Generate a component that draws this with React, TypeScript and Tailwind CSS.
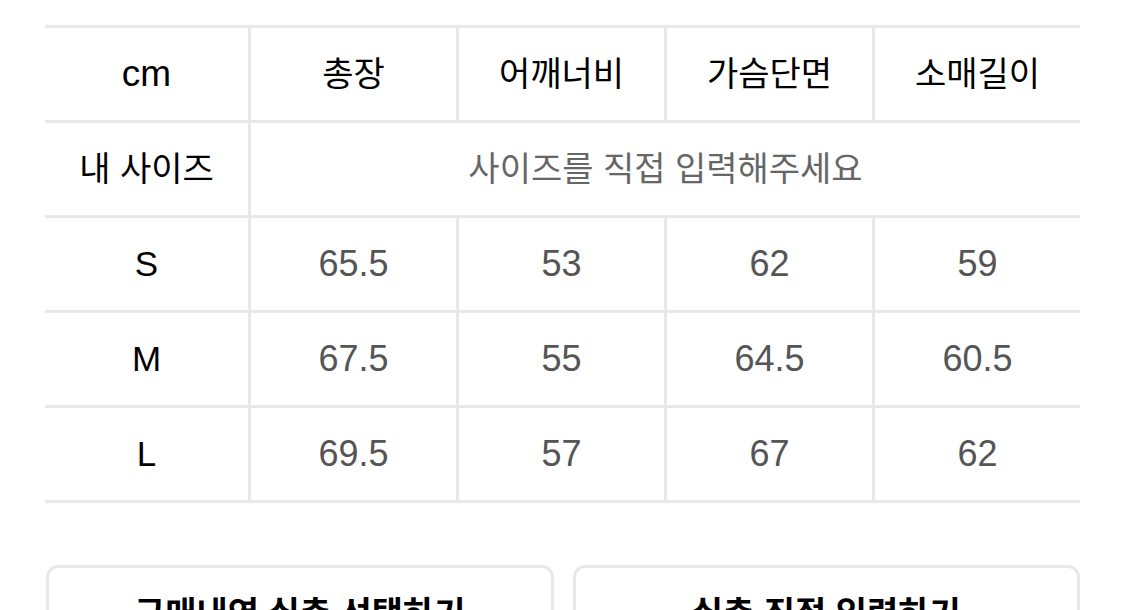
import React from "react";

const font = { fontFamily: '"Liberation Sans", "Noto Sans CJK KR", sans-serif' };

const heads = ["총장", "어깨너비", "가슴단면", "소매길이"];
const rows: [string, string[]][] = [
  ["S", ["65.5", "53", "62", "59"]],
  ["M", ["67.5", "55", "64.5", "60.5"]],
  ["L", ["69.5", "57", "67", "62"]],
];

export default function App() {
  return (
    <div className="w-[1125px] h-[610px] overflow-hidden bg-white" style={font}>
      <div className="pt-[25px] pl-[45px] w-[1080px]">
        <div className="grid grid-cols-[203px_repeat(4,208px)] border-t-[3px] border-[#e8e8e8]">
          {/* header */}
          <div className="h-[95px] border-b-[3px] border-[#e8e8e8] flex items-center justify-center text-[37px] text-black">
            cm
          </div>
          {heads.map((h) => (
            <div
              key={h}
              className="h-[95px] border-b-[3px] border-l-[3px] border-[#e8e8e8] flex items-center justify-center text-[34px] text-black font-normal"
            >
              {h}
            </div>
          ))}
          {/* my size */}
          <div className="h-[95px] border-b-[3px] border-[#e8e8e8] flex items-center justify-center text-[34px] text-black font-normal">
            내 사이즈
          </div>
          <div className="col-span-4 h-[95px] border-b-[3px] border-l-[3px] border-[#e8e8e8] flex items-center justify-center text-[34px] text-[#666]">
            사이즈를 직접 입력해주세요
          </div>
          {rows.map(([s, vals]) => (
            <React.Fragment key={s}>
              <div className="h-[95px] border-b-[3px] border-[#e8e8e8] flex items-center justify-center text-[35px] text-black">
                {s}
              </div>
              {vals.map((v, i) => (
                <div
                  key={i}
                  className="h-[95px] border-b-[3px] border-l-[3px] border-[#e8e8e8] flex items-center justify-center text-[36px] text-[#555]"
                >
                  {v}
                </div>
              ))}
            </React.Fragment>
          ))}
        </div>
      </div>
      <div className="flex gap-[19px] pl-[46px] pt-[62px] w-[1080px]">
        <div className="flex-1 h-[90px] border-[3px] border-[#e8e8e8] rounded-[12px] flex justify-center pt-[21px] text-[34px] font-bold text-black">
          구매내역 실측 선택하기
        </div>
        <div className="flex-1 h-[90px] border-[3px] border-[#e8e8e8] rounded-[12px] flex justify-center pt-[21px] text-[34px] font-bold text-black">
          실측 직접 입력하기
        </div>
      </div>
    </div>
  );
}
